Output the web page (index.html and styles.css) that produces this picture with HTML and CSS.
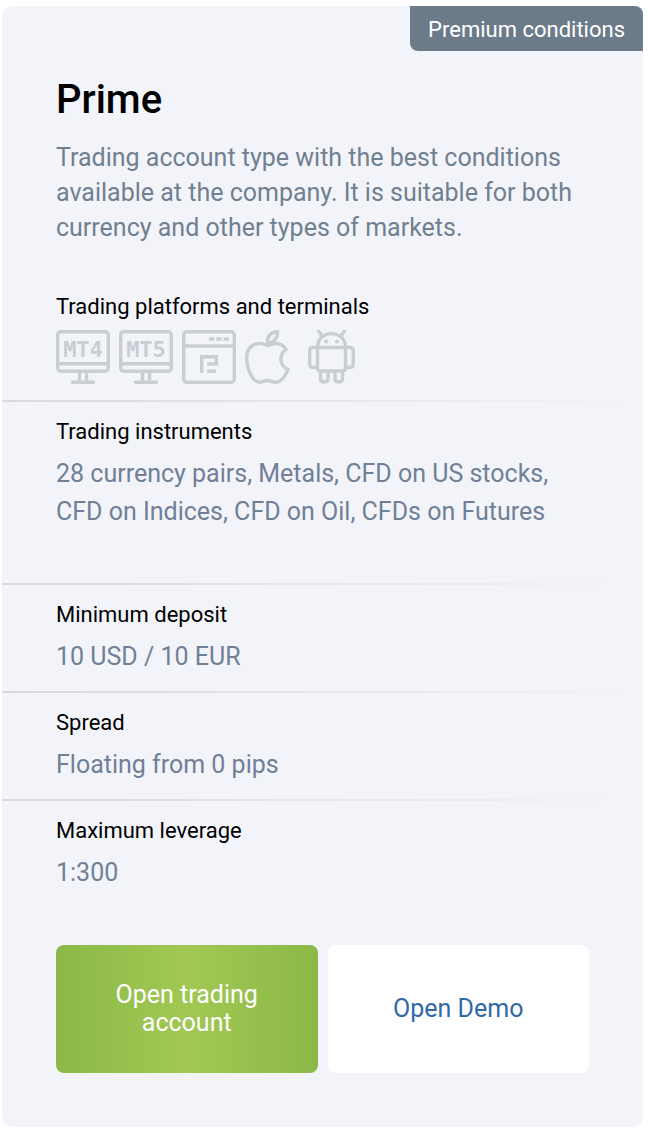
FILE: index.html
```html
<!DOCTYPE html>
<html lang="en">
<head>
<meta charset="utf-8">
<meta name="viewport" content="width=device-width, initial-scale=1">
<title>Prime account</title>
<link rel="stylesheet" href="styles.css">
</head>
<body>
<article class="card">
  <div class="badge">Premium conditions</div>
  <header class="intro">
    <h1 class="title">Prime</h1>
    <p class="description">Trading account type with the best conditions available at the company. It is suitable for both currency and other types of markets.</p>
  </header>
  <section class="row row-platforms">
    <h2 class="label">Trading platforms and terminals</h2>
    <div class="platforms">
      <svg class="icon" viewBox="0 0 54 54" role="img" aria-label="MetaTrader 4">
        <rect x="1.7" y="1.700" width="50.600" height="39.600" rx="3"/>
        <path d="M2 33.700H52M23.500 42V51M30.500 42V51"/><path d="M16.500 52.200H37.500" stroke-linecap="round"/>
        <text class="icon-text" x="27" y="27">MT4</text>
      </svg>
      <svg class="icon" viewBox="0 0 54 54" role="img" aria-label="MetaTrader 5">
        <rect x="1.7" y="1.700" width="50.600" height="39.600" rx="3"/>
        <path d="M2 33.700H52M23.500 42V51M30.500 42V51"/><path d="M16.500 52.200H37.500" stroke-linecap="round"/>
        <text class="icon-text" x="27" y="27">MT5</text>
      </svg>
      <svg class="icon" viewBox="0 0 54 54" role="img" aria-label="Web terminal">
        <rect x="1.7" y="1.700" width="50.600" height="50.600" rx="3"/>
        <path d="M2 16H52M27 9h5.300M34.300 9h5.300M41.500 9h5.300"/>
        <path d="M19.700 43V26.700H34.300V34H25.200M25.200 41.300H34"/>
      </svg>
      <svg class="icon" viewBox="0 0 54 54" role="img" aria-label="iOS">
        <path d="M22.500 15.500C19 14 16.500 13 13.500 13.500C5 14.500 1.700 20.500 1.700 28C1.700 38.500 7.500 52.300 14.500 52.300C17.500 52.300 19 50.500 22.500 50.500C26 50.500 27.500 52.300 30.500 52.300C36 52.300 41 45.500 43 39.500C35 36 33 25.500 41 19.500C38 14.500 34 13.500 31 13.500C28 13.500 25.500 15.500 22.500 15.500Z"/>
        <path d="M22.500 13C22 6 26 1.800 32.500 1.700C33 8 29 12.500 22.500 13Z"/>
      </svg>
      <svg class="icon" viewBox="0 0 54 54" role="img" aria-label="Android">
        <path d="M9.500 17.500V38Q9.500 41 12.500 41H34.500Q37.500 41 37.500 38V17.500ZM9.500 17.500C9.500 -1 37.500 -1 37.500 17.500"/>
        <path d="M14.500 6.500L10.500 1M32.500 6.500L36.500 1" stroke-linecap="round"/>
        <path d="M9.500 17.500H5Q1.700 17.500 1.700 21V34Q1.700 37.500 5 37.500H9.500M37.500 17.500H42Q45.300 17.500 45.300 21V34Q45.300 37.500 42 37.500H37.500M12.500 41V48.500Q12.500 52 16.200 52Q20 52 20 48.500V41M27 41V48.500Q27 52 30.800 52Q34.500 52 34.500 48.500V41"/>
        <circle class="eye" cx="18" cy="11.500" r="2"/><circle class="eye" cx="29" cy="11.500" r="2"/>
      </svg>
    </div>
  </section>
  <section class="row">
    <h2 class="label">Trading instruments</h2>
    <p class="value value-tall">28 currency pairs, Metals, CFD on US stocks, CFD on Indices, CFD on Oil, CFDs on Futures</p>
  </section>
  <section class="row">
    <h2 class="label">Minimum deposit</h2>
    <p class="value">10 USD / 10 EUR</p>
  </section>
  <section class="row">
    <h2 class="label">Spread</h2>
    <p class="value">Floating from 0 pips</p>
  </section>
  <section class="row">
    <h2 class="label">Maximum leverage</h2>
    <p class="value">1:300</p>
  </section>
  <div class="actions">
    <button class="button button-primary" type="button">Open trading account</button>
    <button class="button button-demo" type="button">Open Demo</button>
  </div>
</article>
</body>
</html>
```
FILE: styles.css
```css
* {
  box-sizing: border-box;
}

body {
  margin: 0;
  padding: 6px 5px 5px 2px;
  background: #fff;
  font-family: Roboto, "Liberation Sans", sans-serif;
}

h1, h2, p {
  margin: 0;
  font-weight: 400;
}

.card {
  display: flex;
  flex-direction: column;
  padding-bottom: 54px;
  border-radius: 10px;
  background: #f3f4fa;
}

.badge {
  align-self: flex-end;
  padding: 9px 18px 7px;
  border-radius: 0 8px 0 8px;
  background: #6c7b89;
  color: #fff;
  font-size: 22px;
  line-height: 29px;
}

.intro {
  padding: 25px 54px 0;
}

.title {
  color: #000;
  font-size: 40px;
  font-weight: 500;
  line-height: 48px;
}

.description {
  margin-top: 16px;
  color: #708090;
  font-size: 25px;
  line-height: 35px;
}

.row {
  padding: 17px 54px 15px;
  background: linear-gradient(90deg, #d7d9de, #f3f4fa) top / 100% 2px no-repeat;
}

.row-platforms {
  padding: 47px 54px 16px;
  background: none;
}

.label {
  color: #000;
  font-size: 22px;
  line-height: 30px;
}

.platforms {
  display: flex;
  gap: 9px;
  margin-top: 8px;
}

.icon {
  width: 54px;
  height: 54px;
  fill: none;
  stroke: #c8ced2;
  stroke-width: 3.4;
}

.icon-text {
  fill: #c8ced2;
  stroke: none;
  font-family: "DejaVu Sans Mono", monospace;
  font-size: 22px;
  font-weight: 700;
  text-anchor: middle;
}

.eye {
  fill: #c8ced2;
  stroke: none;
}

.value {
  margin-top: 8px;
  color: #708096;
  font-size: 25px;
  line-height: 38px;
}

.value-tall {
  min-height: 113px;
}

.actions {
  display: grid;
  grid-template-columns: 1fr 1fr;
  gap: 10px;
  margin-top: 38px;
  padding: 0 54px;
}

.button {
  min-height: 128px;
  padding: 0 48px;
  border: 0;
  border-radius: 8px;
  font-family: inherit;
  font-size: 25px;
  line-height: 28px;
}

.button-primary {
  background: linear-gradient(90deg, #8bb847, #a1c853 50%, #8bb847);
  color: #fff;
}

.button-demo {
  background: #fff;
  color: #3069a8;
}
```
